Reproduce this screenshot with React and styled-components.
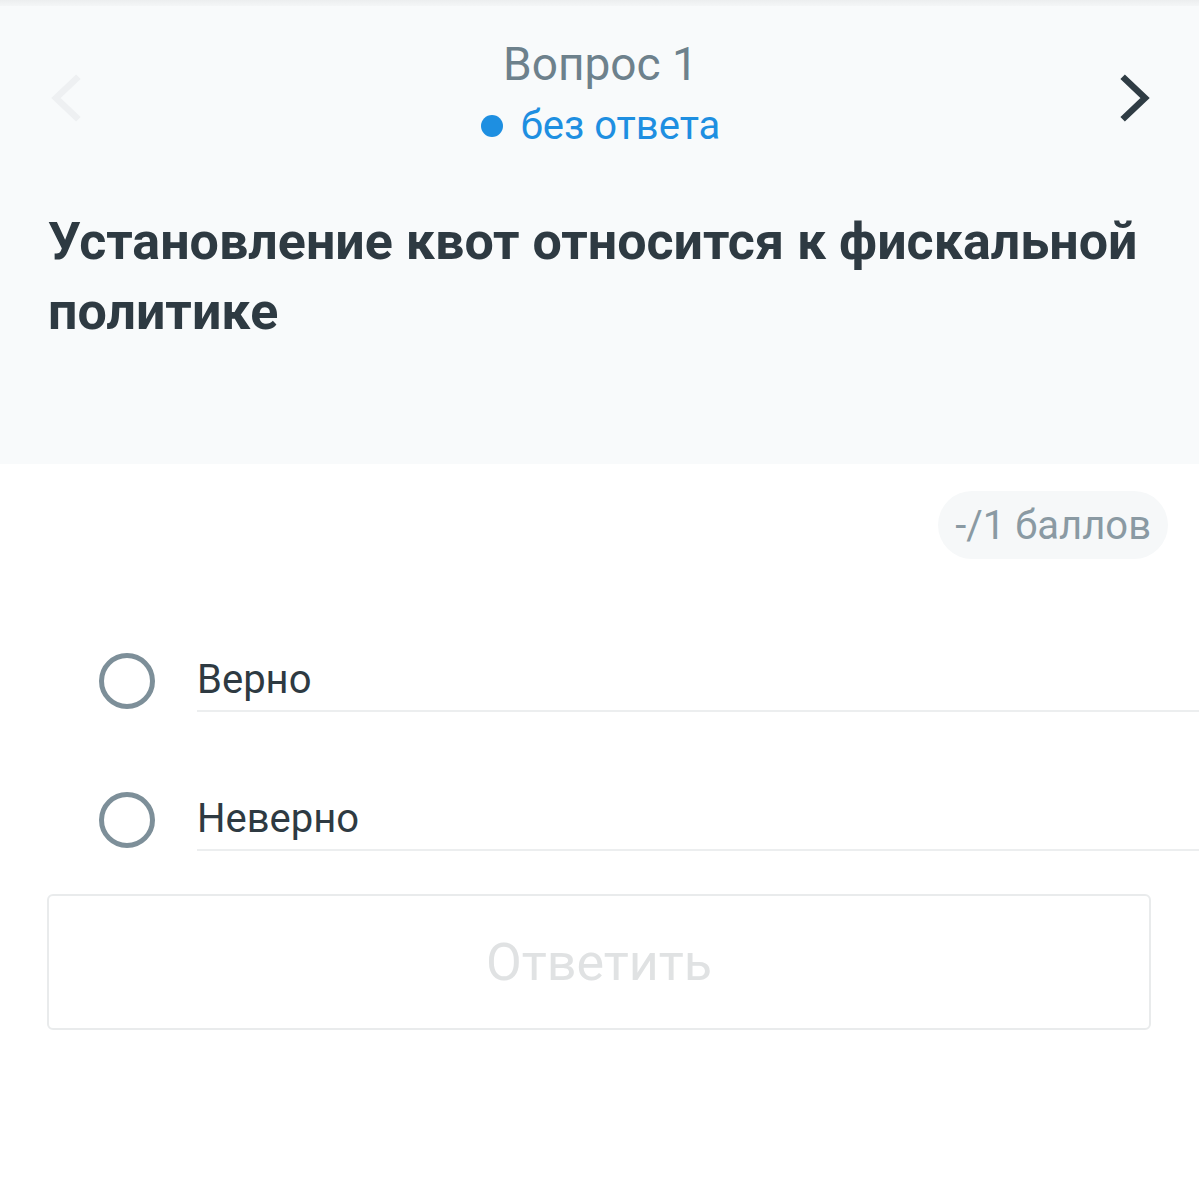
import React from 'react';
import styled, { createGlobalStyle } from 'styled-components';

const GlobalStyle = createGlobalStyle`
  html, body {
    margin: 0;
    padding: 0;
    background: #ffffff;
  }
  body {
    font-family: Roboto, "Noto Sans", Arial, sans-serif;
    color: #2e3a42;
  }
`;

const Page = styled.div`
  width: 1199px;
  min-height: 1200px;
  background: #ffffff;
`;

const TopLine = styled.div`
  height: 6px;
  background: linear-gradient(#eceeef, #f4f6f7);
`;

const Header = styled.header`
  background: #f8fafb;
  padding: 31px 0 117px;
`;

const NavRow = styled.div`
  display: grid;
  grid-template-columns: 1fr auto 1fr;
  align-items: center;
  padding: 0 48px 0 50px;
`;

const NavButton = styled.div`
  display: flex;
  justify-content: ${(p) => (p.$right ? 'flex-end' : 'flex-start')};
  align-items: center;
  margin-top: 8px;
  color: ${(p) => (p.$disabled ? '#eef0f2' : '#2f3c44')};
`;

const Center = styled.div`
  display: flex;
  flex-direction: column;
  align-items: center;
`;

const Title = styled.div`
  font-size: 46px;
  line-height: 54px;
  color: #6d818c;
`;

const Status = styled.div`
  display: flex;
  align-items: center;
  gap: 18px;
  margin-top: 11px;
  font-size: 40px;
  line-height: 48px;
  color: #1e8fe1;
`;

const Dot = styled.span`
  width: 22px;
  height: 22px;
  border-radius: 50%;
  background: #1e8fe1;
`;

const Question = styled.h1`
  margin: 57px 0 0;
  padding: 0 48px;
  font-size: 52px;
  line-height: 70px;
  font-weight: 700;
  color: #2e3a42;
`;

const ScoreRow = styled.div`
  display: flex;
  justify-content: flex-end;
  padding: 27px 31px 0 0;
`;

const ScorePill = styled.div`
  height: 68px;
  padding: 0 17px;
  display: flex;
  align-items: center;
  border-radius: 34px;
  background: #f6f8f9;
  font-size: 40px;
  color: #8a9aa3;
`;

const Options = styled.div`
  display: flex;
  flex-direction: column;
  gap: 77px;
  margin-top: 91px;
  padding-left: 99px;
`;

const Option = styled.label`
  display: flex;
  align-items: center;
  gap: 42px;
`;

const Radio = styled.span`
  flex: none;
  width: 56px;
  height: 56px;
  box-sizing: border-box;
  border-radius: 50%;
  border: 5px solid #7d8f99;
`;

const OptionText = styled.span`
  flex: 1;
  height: 60px;
  line-height: 60px;
  font-size: 40px;
  color: #2e3a42;
  border-bottom: 2px solid #eceeef;
`;

const SubmitButton = styled.button`
  display: block;
  box-sizing: border-box;
  margin: 43px 48px 0 47px;
  width: 1104px;
  height: 136px;
  background: #ffffff;
  border: 2px solid #e9ebec;
  border-radius: 6px;
  font-family: Roboto, "Noto Sans", Arial, sans-serif;
  font-size: 52px;
  color: #e0e2e3;
`;

const Chevron = ({ dir }) => (
  <svg width="32" height="48" viewBox="0 0 32 48" fill="none">
    <polyline
      points={dir === 'left' ? '26,5 6,24 26,43' : '6,5 26,24 6,43'}
      stroke="currentColor"
      strokeWidth="6.5"
      strokeLinecap="square"
      strokeLinejoin="miter"
    />
  </svg>
);

export default function App() {
  return (
    <Page>
      <GlobalStyle />
      <TopLine />
      <Header>
        <NavRow>
          <NavButton $disabled>
            <Chevron dir="left" />
          </NavButton>
          <Center>
            <Title>Вопрос 1</Title>
            <Status>
              <Dot />
              без ответа
            </Status>
          </Center>
          <NavButton $right>
            <Chevron dir="right" />
          </NavButton>
        </NavRow>
        <Question>Установление квот относится к фискальной политике</Question>
      </Header>
      <ScoreRow>
        <ScorePill>-/1 баллов</ScorePill>
      </ScoreRow>
      <Options>
        <Option>
          <Radio />
          <OptionText>Верно</OptionText>
        </Option>
        <Option>
          <Radio />
          <OptionText>Неверно</OptionText>
        </Option>
      </Options>
      <SubmitButton>Ответить</SubmitButton>
    </Page>
  );
}
